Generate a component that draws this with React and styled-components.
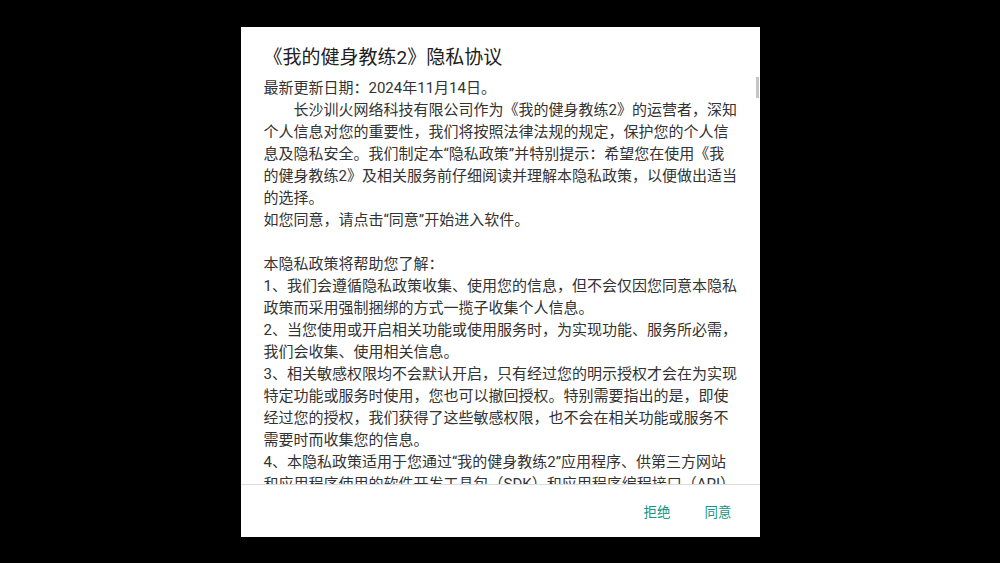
import styled, { createGlobalStyle } from 'styled-components';

const GlobalStyle = createGlobalStyle`
    html, body {
        margin: 0;
        padding: 0;
        background: #000;
    }
    body {
        font-family: Roboto, "Noto Sans CJK SC", sans-serif;
    }
`

const paragraphs = [
    { text: '最新更新日期：2024年11月14日。' },
    { text: '长沙训火网络科技有限公司作为《我的健身教练2》的运营者，深知个人信息对您的重要性，我们将按照法律法规的规定，保护您的个人信息及隐私安全。我们制定本“隐私政策”并特别提示：希望您在使用《我的健身教练2》及相关服务前仔细阅读并理解本隐私政策，以便做出适当的选择。', indent: true },
    { text: '如您同意，请点击“同意”开始进入软件。' },
    { text: '', blank: true },
    { text: '本隐私政策将帮助您了解：' },
    { text: '1、我们会遵循隐私政策收集、使用您的信息，但不会仅因您同意本隐私政策而采用强制捆绑的方式一揽子收集个人信息。' },
    { text: '2、当您使用或开启相关功能或使用服务时，为实现功能、服务所必需，我们会收集、使用相关信息。' },
    { text: '3、相关敏感权限均不会默认开启，只有经过您的明示授权才会在为实现特定功能或服务时使用，您也可以撤回授权。特别需要指出的是，即使经过您的授权，我们获得了这些敏感权限，也不会在相关功能或服务不需要时而收集您的信息。' },
    { text: '4、本隐私政策适用于您通过“我的健身教练2”应用程序、供第三方网站和应用程序使用的软件开发工具包（SDK）和应用程序编程接口（API）方式来向您提供的产品和服务。' },
];

const App = () => {
    return (
        <>
            <GlobalStyle />
            <Screen>
                <Dialog>
                    <Title>《我的健身教练2》隐私协议</Title>
                    <Body>
                        <Content>
                            {paragraphs.map((p, i) => (
                                <Paragraph key={i} $indent={p.indent}>
                                    {p.blank ? '\u00a0' : p.text}
                                </Paragraph>
                            ))}
                        </Content>
                        <ScrollThumb />
                    </Body>
                    <Actions>
                        <ActionButton>拒绝</ActionButton>
                        <ActionButton>同意</ActionButton>
                    </Actions>
                </Dialog>
            </Screen>
        </>
    )
};

export default App;

const Screen = styled.div`
    width: 1000px;
    height: 563px;
    background: #000;
    display: flex;
    align-items: center;
    justify-content: center;
`
const Dialog = styled.div`
    width: 519px;
    height: 510px;
    background: #fff;
    display: flex;
    flex-direction: column;
    overflow: hidden;
`
const Title = styled.h2`
    margin: 0;
    padding: 17px 23px 5px;
    font-size: 19px;
    line-height: 28px;
    font-weight: 400;
    color: #212121;
`
const Body = styled.div`
    position: relative;
    flex: 1;
    overflow: hidden;
    border-bottom: 1px solid #dcdcdc;
`
const Content = styled.div`
    width: 473.5px;
    padding: 0 0 0 23px;
`
const Paragraph = styled.p`
    margin: 0;
    font-size: 15px;
    line-height: 22px;
    color: #333;
    text-indent: ${p => p.$indent ? '2em' : '0'};
`
const ScrollThumb = styled.div`
    position: absolute;
    top: 0;
    right: 1px;
    width: 3px;
    height: 21px;
    background: #c4c4c4;
`
const Actions = styled.div`
    height: 52px;
    display: flex;
    align-items: center;
    justify-content: flex-end;
    gap: 10px;
    padding: 0 16px;
`
const ActionButton = styled.button`
    border: none;
    background: none;
    padding: 8px 12px;
    font-family: Roboto, "Noto Sans CJK SC", sans-serif;
    font-size: 13.5px;
    color: #179484;
    cursor: pointer;
`
